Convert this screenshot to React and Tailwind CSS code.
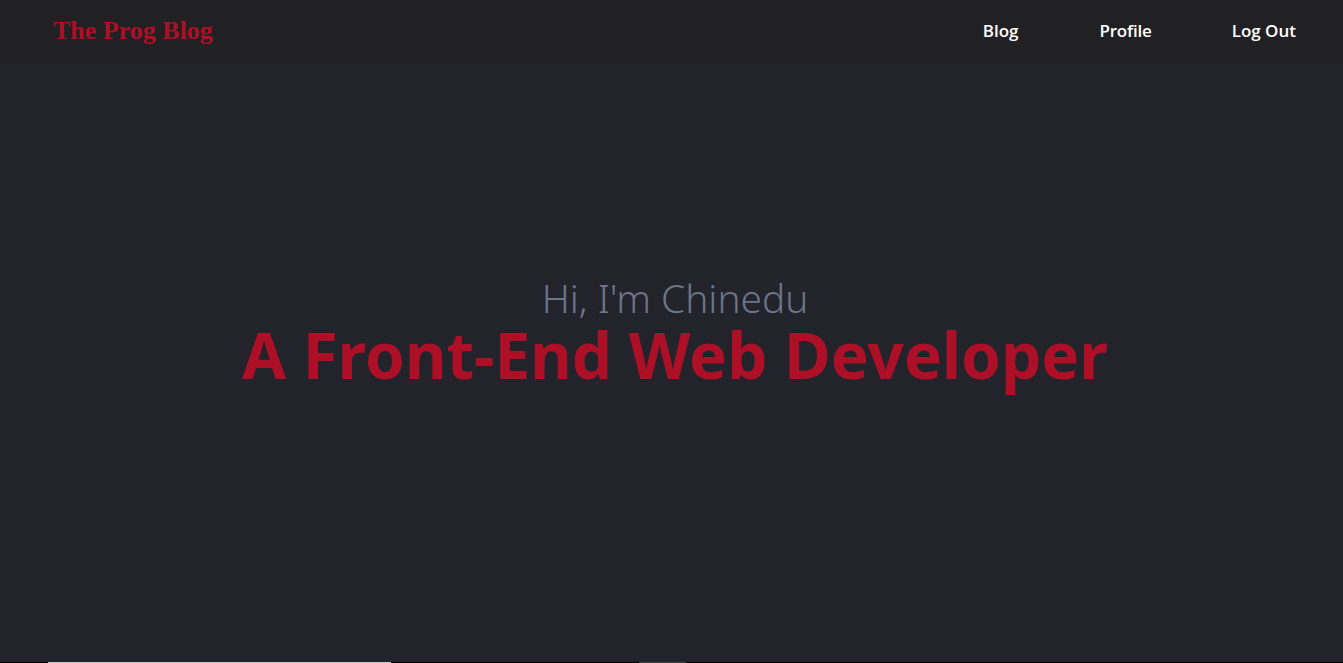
export default function App() {
  return (
    <div className="min-h-[663px] flex flex-col bg-[#22232b]">
      <header className="h-[65px] bg-[#212123] flex items-center justify-between pl-[53px] pr-[47px] pb-[3px]">
        <div className="text-[#ad0f27] font-bold text-[26px] leading-none" style={{ fontFamily: '"Liberation Serif", serif' }}>
          The Prog Blog
        </div>
        <nav className="flex items-center gap-[80px] text-white font-semibold text-[17px]" style={{ fontFamily: '"Open Sans", sans-serif' }}>
          <a className="mr-[1px]">Blog</a>
          <a className="tracking-[-0.2px]">Profile</a>
          <a>Log Out</a>
        </nav>
      </header>
      <main className="flex-1 flex flex-col items-center pt-[211px] pl-[7px]" style={{ fontFamily: '"Noto Sans", sans-serif' }}>
        <div className="text-[#6c7588] font-light text-[38.8px] leading-[45px]">Hi, I'm Chinedu</div>
        <div className="text-[#ad0f27] font-bold text-[63.8px] leading-[68px]">A Front-End Web Developer</div>
      </main>
      <div className="h-px bg-black flex">
        <div className="ml-[48px] w-[343px] bg-[#c8c8c8]" />
        <div className="ml-[248px] w-[47px] bg-[#444]" />
      </div>
    </div>
  );
}
